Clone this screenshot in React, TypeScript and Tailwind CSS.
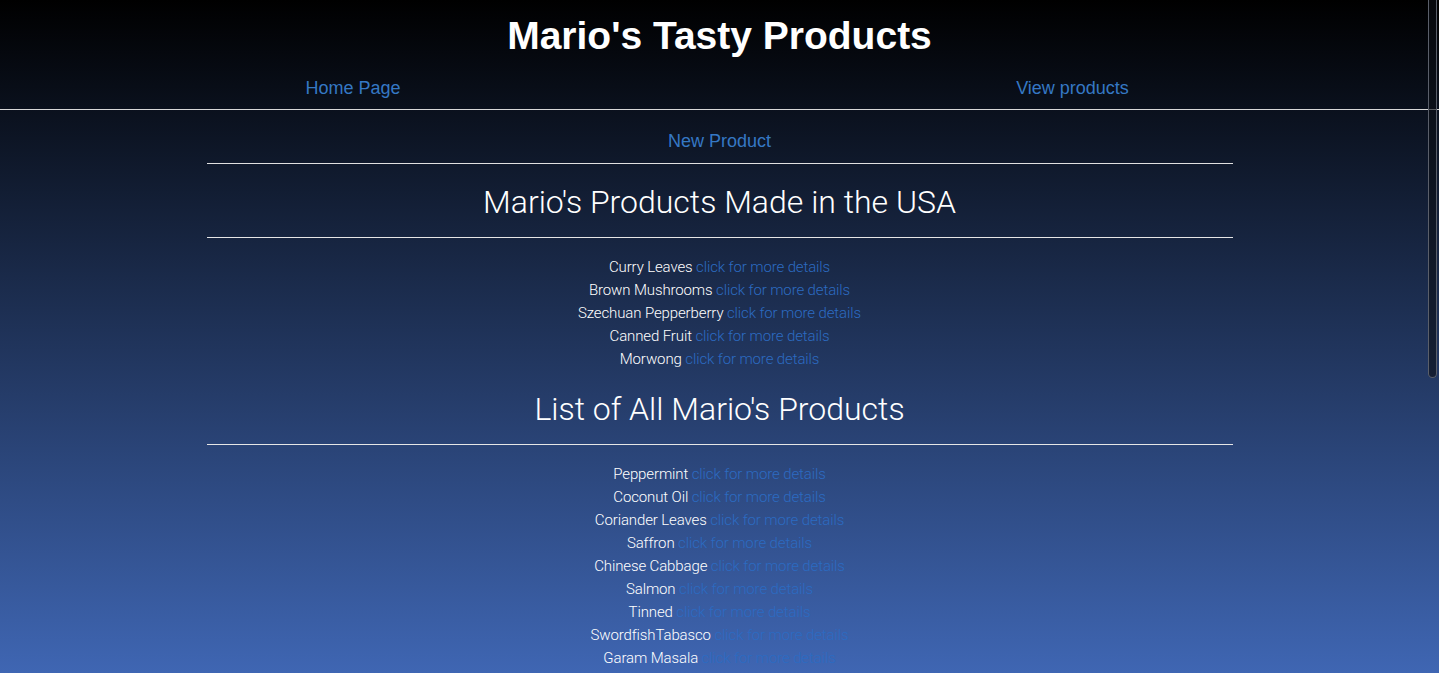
import React from "react";

const usaProducts = ["Curry Leaves", "Brown Mushrooms", "Szechuan Pepperberry", "Canned Fruit", "Morwong"];

const allProducts = [
  "Peppermint",
  "Coconut Oil",
  "Coriander Leaves",
  "Saffron",
  "Chinese Cabbage",
  "Salmon",
  "Tinned",
  "SwordfishTabasco",
  "Garam Masala",
];

function ProductList({ items }: { items: string[] }) {
  return (
    <ul className="pt-[18px] text-center text-[15px] leading-[23px] tracking-[-0.12px] font-light">
      {items.map((name) => (
        <li key={name}>
          <span className="text-white">{name}</span>{" "}
          <a href="#" className="text-[#2c6bc2]">
            click for more details
          </a>
        </li>
      ))}
    </ul>
  );
}

export default function App() {
  return (
    <div className="relative h-[673px] overflow-hidden bg-linear-to-b/srgb from-black to-[#3f66b3] font-['Liberation_Sans',Arial,sans-serif]">
      <h1 className="pt-[14px] text-center text-[39px] leading-[43px] font-bold text-white">
        Mario's Tasty Products
      </h1>

      <nav className="flex border-b border-[#d8d8d8] pt-[21px] pb-[11px] text-[18px] leading-[20px]">
        <div className="w-[706px] text-center">
          <a href="#" className="text-[#3578c4]">Home Page</a>
        </div>
        <div className="flex-1 text-center">
          <a href="#" className="text-[#3578c4]">View products</a>
        </div>
      </nav>

      <div className="mx-auto w-[1026px]">
        <div className="border-b border-[#e0e0e0] pt-[21px] pb-[12px] text-center text-[18px] leading-[20px]">
          <a href="#" className="text-[#3578c4]">New Product</a>
        </div>

        <div className="font-['Roboto',sans-serif]">
          <h2 className="border-b border-[#e6e6e6] pt-[18px] pb-[15px] text-center text-[32px] leading-[40px] font-light text-white">
            Mario's Products Made in the USA
          </h2>
          <ProductList items={usaProducts} />

          <h2 className="border-b border-[#e6e6e6] pt-[18px] pb-[15px] text-center text-[32px] leading-[40px] font-light text-white">
            List of All Mario's Products
          </h2>
          <ProductList items={allProducts} />
        </div>
      </div>

      {/* overlay scrollbar thumb */}
      <div className="absolute top-0 right-[2px] h-[378px] w-[9px] rounded-b-full border border-t-0 border-[#5a5f6a] bg-[#0c0f16]/60" />
    </div>
  );
}
